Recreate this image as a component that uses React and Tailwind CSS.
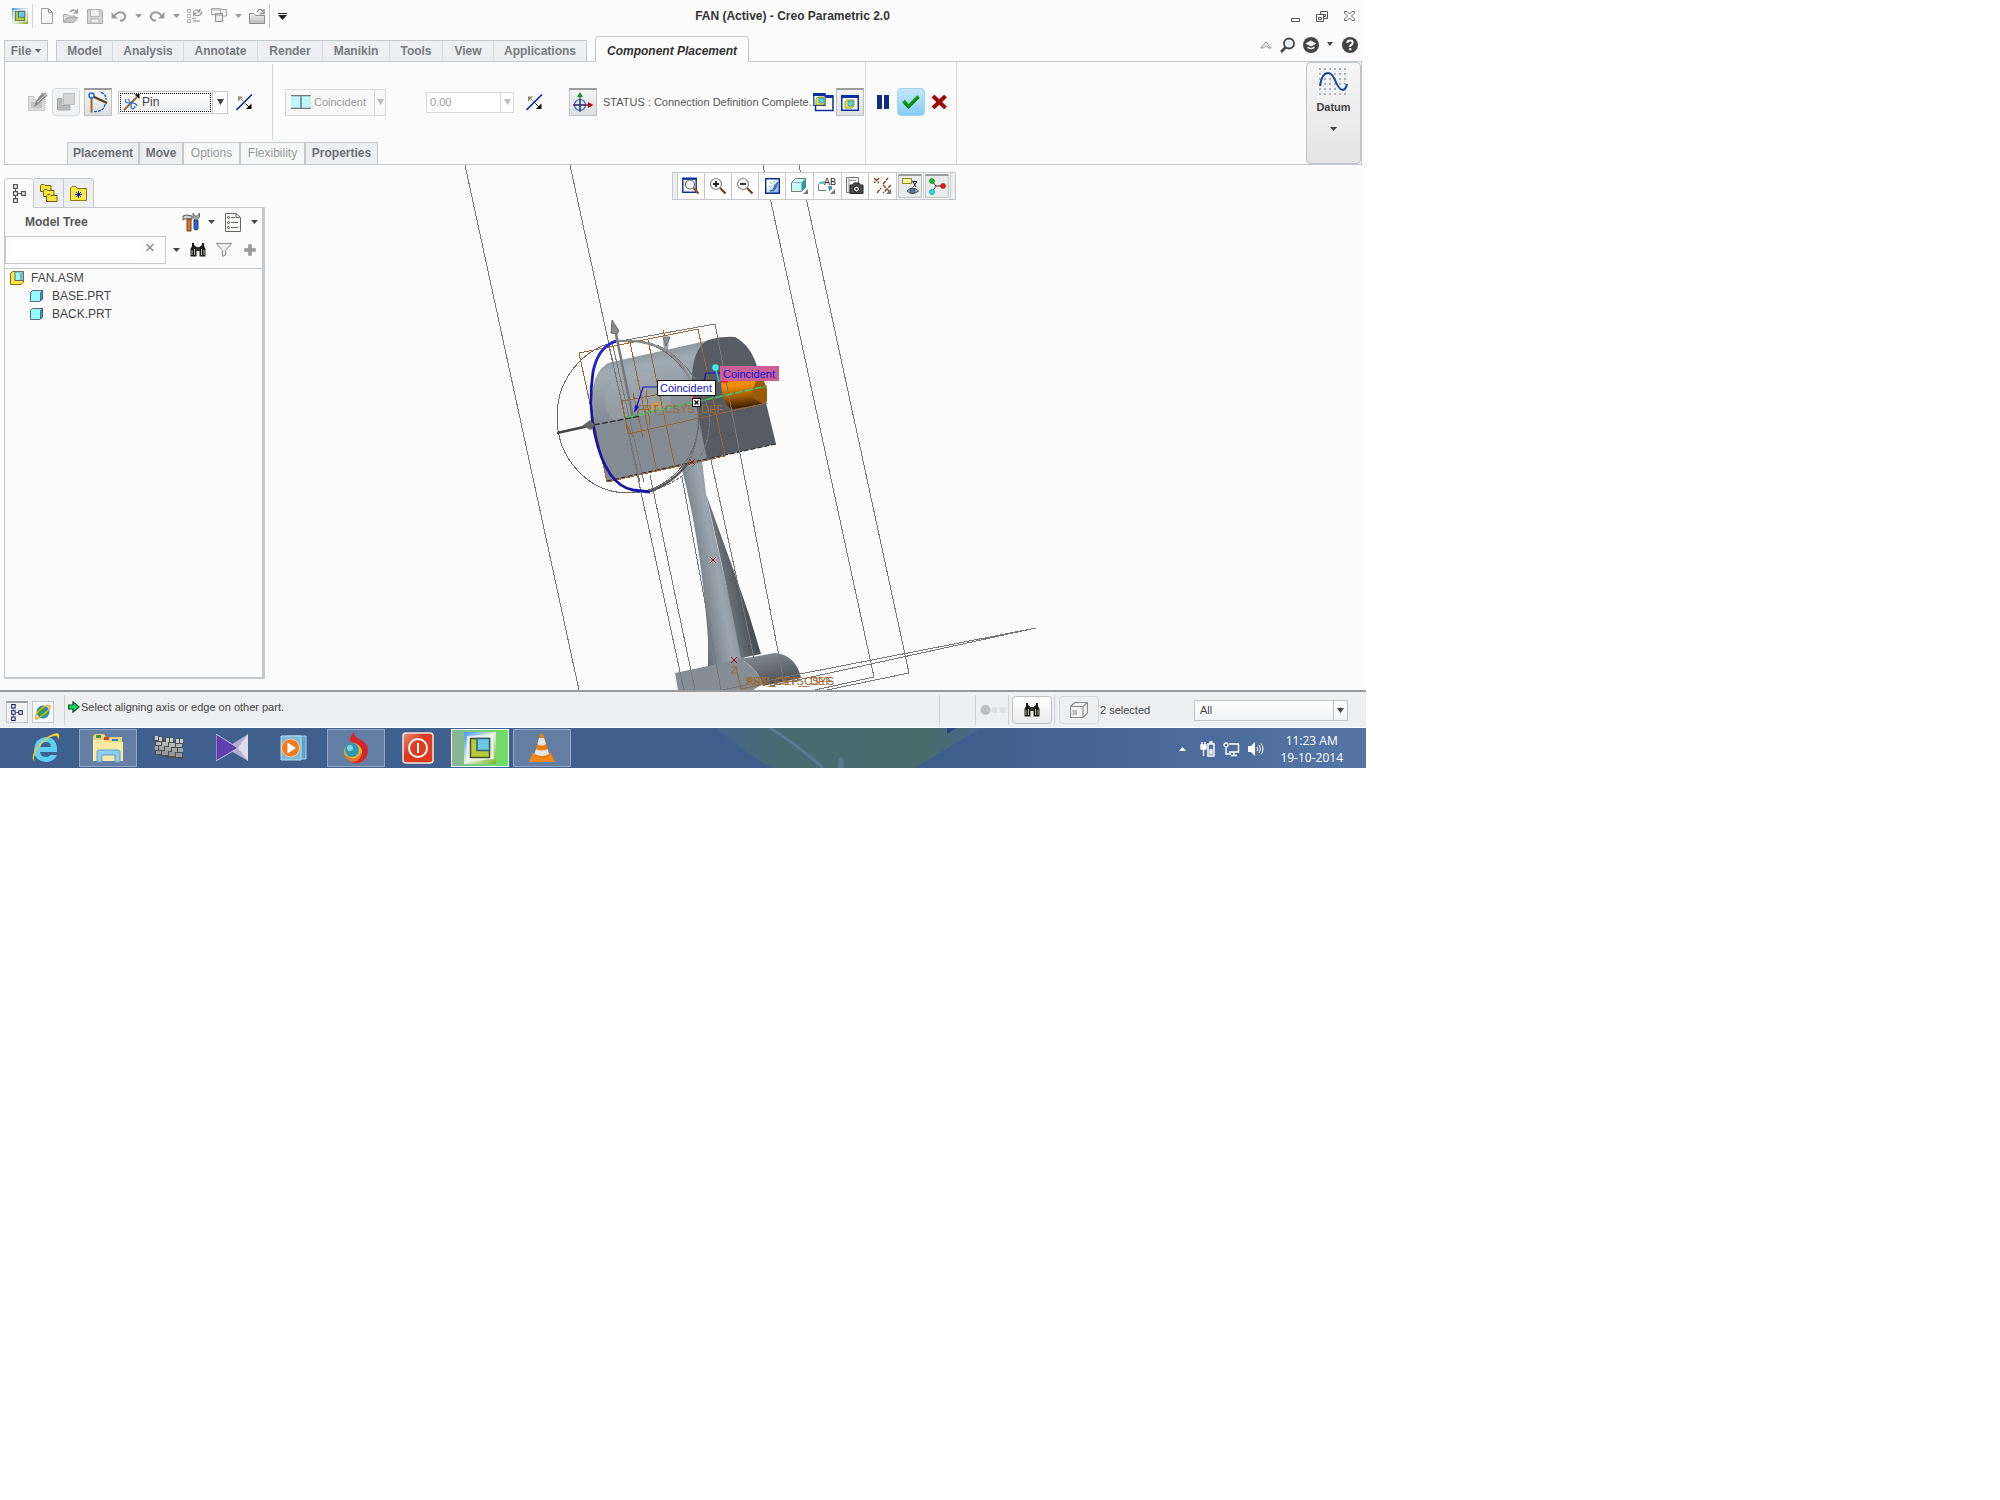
import clsx from 'clsx';

const Icon = ({ w = 16, h = 16, children, className }) => (
  <svg width={w} height={h} viewBox={`0 0 ${w} ${h}`} fill="none" className={clsx('shrink-0', className)} aria-hidden="true">
    {children}
  </svg>
);

const Caret = ({ color = '#444' }) => (
  <Icon w={7} h={4}>
    <path d="M0 0H7L3.5 4Z" fill={color} />
  </Icon>
);

const CreoIcon = ({ size = 16 }) => (
  <svg width={size} height={size} viewBox="0 0 32 32" className="shrink-0" aria-hidden="true">
    <defs>
      <linearGradient id={`creo${size}`} x1="0" y1="0" x2="1" y2="1">
        <stop offset="0" stopColor="#3d9bea" />
        <stop offset=".5" stopColor="#e4f2e8" />
        <stop offset="1" stopColor="#7ab51d" />
      </linearGradient>
    </defs>
    <rect width="32" height="32" fill={`url(#creo${size})`} />
    <path d="M3 4L29 2L30 27L2 30Z" fill="#f4f5f2" opacity=".85" />
    <rect x="6.5" y="6.5" width="19" height="19" fill="#b4cc35" stroke="#4b5030" strokeWidth="1.5" />
    <path d="M13 6.5H25.5V18.5H13Z" fill="#6cc9e6" stroke="#35617a" strokeWidth="1.5" />
  </svg>
);

const Doc = () => (
  <Icon>
    <path d="M2.5 .5H9.5L13.5 4.5V15.5H2.5Z" fill="#f7f7f7" stroke="#a0a0a0" />
    <path d="M9.5 .5V4.5H13.5" stroke="#a0a0a0" />
  </Icon>
);

const OpenFolder = () => (
  <Icon>
    <path d="M.5 14.5V6.5H5L6 8H12V10" fill="#ddd" stroke="#aaa" />
    <path d="M.5 14.5L4 9.5H15L11 14.5Z" fill="#c4c4c4" stroke="#aaa" />
    <path d="M7 4Q10 0 14 4M14.5 1V5H10.5" stroke="#999" strokeWidth="1.3" />
  </Icon>
);

const Save = () => (
  <Icon>
    <path d="M.5 1.5H14L15.5 3V15.5H.5Z" fill="#d4d4d4" stroke="#aaa" />
    <path d="M3.5 1.5H12.5V8.5H3.5Z" fill="#f0f0f0" stroke="#b4b4b4" />
    <path d="M4 11H12V15H4Z" fill="#eee" stroke="#b4b4b4" />
  </Icon>
);

const Undo = ({ flip }) => (
  <Icon className={flip ? '-scale-x-100' : undefined}>
    <path d="M3 8Q7 3 11 4.5Q15 6 14 10Q12.5 13 9 12.5" stroke="#9c9c9c" strokeWidth="2" />
    <path d="M.5 4V10.5H7Z" fill="#9c9c9c" />
  </Icon>
);

const Regenerate = () => (
  <Icon>
    <path d="M.5 1.5H3.5V4.5H.5ZM.5 6.5H3.5V9.5H.5ZM.5 11.5H3.5V14.5H.5Z" stroke="#b4b4b4" />
    <path d="M6 13H13M5 10.5H9" stroke="#aaa" strokeWidth="1.5" />
    <path d="M6 5Q8 0 12 3M15 4Q13 9 8 7" stroke="#999" strokeWidth="1.3" />
    <path d="M13.5 0V4.5H9.5ZM6 9V4.5L10 5Z" fill="#999" />
  </Icon>
);

const Windows = () => (
  <Icon>
    <path d="M.5 .5H9.5V6.5H.5ZM.5 2H9.5" stroke="#aaa" strokeWidth="1.2" />
    <path d="M9.5 1.5H15.5V8H12" stroke="#aaa" strokeWidth="1.2" />
    <path d="M4.5 5.5H11.5V13.5H4.5ZM4.5 7H11.5" fill="#eee" stroke="#999" strokeWidth="1.2" />
  </Icon>
);

const CloseFolder = () => (
  <Icon>
    <defs>
      <linearGradient id="foldgrey" x1="0" y1="0" x2="0" y2="1">
        <stop offset="0" stopColor="#f2f2f2" />
        <stop offset="1" stopColor="#b9b9b9" />
      </linearGradient>
    </defs>
    <path d="M.5 15.5V5.5H5L6.5 7.5H15.5V15.5Z" fill="url(#foldgrey)" stroke="#8c8c8c" />
    <path d="M8 4Q11 -1 14 3.5M15 1V5.5H10.5" stroke="#888" strokeWidth="1.4" />
  </Icon>
);

const Flip = () => (
  <Icon w={17} h={17}>
    <path d="M.5 16L16 .5" stroke="#0a2f9c" strokeWidth="1.6" />
    <path d="M2 2.5H7L2 7.5Z" fill="#8c8870" />
    <path d="M4 4L8 8" stroke="#8c8870" />
    <path d="M10 15H15.5V9.5Z" fill="#000" />
    <path d="M9.5 9.5L13 13" stroke="#000" />
  </Icon>
);

const EditSketch = () => (
  <Icon w={20} h={20}>
    <path d="M.5 4.5H6V8H11V4.5H17V18.5H.5Z" fill="#dcdcdc" stroke="#a9a9a9" strokeDasharray="1 1" />
    <path d="M3 10H14V16H3Z" fill="#c2c2c2" />
    <path d="M7 14L9 9L18 1M8 13L19 3M10 8L15 1" stroke="#8c8c8c" strokeWidth="1.6" />
  </Icon>
);

const Stack = () => (
  <Icon w={18} h={18}>
    <path d="M.5 5.5H5V12.5H13V17H.5Z" fill="#b9b9b9" stroke="#a6a6a6" />
    <path d="M6.5 .5H17.5V11.5H6.5Z" fill="#d6d6d6" stroke="#bbb" />
  </Icon>
);

const Mechanism = () => (
  <Icon w={22} h={22}>
    <path d="M4.5 5V20.5" stroke="#9a6a1e" strokeWidth="2" />
    <path d="M5 4L20 11" stroke="#5a3d0c" strokeWidth="2" />
    <path d="M14 .5Q19 1.5 19 8M18 12Q17 20 7 19.5" stroke="#1a5fc8" strokeWidth="1.3" strokeDasharray="3 1" />
    <circle cx="4.5" cy="3.5" r="2.5" fill="#fff" stroke="#1668e0" strokeWidth="1.5" />
  </Icon>
);

const PinIcon = () => (
  <Icon w={17} h={17}>
    <path d="M1 16L14 3" stroke="#9a6a1e" strokeWidth="2" />
    <path d="M16.5 0V5L11.5 .5Z" fill="#111" />
    <path d="M3 5Q1 9 6 9Q13 8 14 12M5 5Q9 10 8 14Q12 16 12 12" stroke="#2a6ad0" strokeWidth="1.2" />
  </Icon>
);

const CoincidentIcon = () => (
  <Icon w={20} h={14}>
    <path d="M0 1H20V13H0Z" fill="#bff6fa" />
    <path d="M0 .5H20M0 13.5H20M10 0V14" stroke="#777" strokeWidth="1.5" />
  </Icon>
);

const DragAxes = () => (
  <Icon w={22} h={22}>
    <circle cx="8" cy="13" r="5.5" stroke="#3654c8" strokeWidth="1.2" />
    <path d="M8 4V20" stroke="#187a28" strokeWidth="1.4" />
    <path d="M1 13H18" stroke="#7a2020" strokeWidth="1.4" />
    <path d="M8 7V19M2 13H14" stroke="#1c3aa8" strokeWidth="1" />
    <path d="M5 5L8 0L11 5Z" fill="#0d9a20" />
    <path d="M16 10L21.5 13L16 16Z" fill="#b80d0d" />
  </Icon>
);

const MiniPart = ({ x, y }) => (
  <g transform={`translate(${x} ${y})`}>
    <path d="M0 2L2 0H9V6L7 8H0Z" fill="#f6e94a" stroke="#8a7a10" strokeWidth=".8" />
    <path d="M3 1H8V6H3Z" fill="#4fd8e8" stroke="#2a8a98" strokeWidth=".7" />
  </g>
);

const SeparateWin = () => (
  <Icon w={21} h={19}>
    <path d="M6 3H20V17.5H2.5V13" fill="#fff" stroke="#0a2f9c" strokeWidth="1.5" />
    <path d="M13 3.5H20" stroke="#0a2f9c" strokeWidth="3" />
    <path d="M.8 .8H12V12.5H.8Z" fill="#fff" stroke="#0a2f9c" strokeWidth="1.2" />
    <path d="M0 1.5H12.5" stroke="#0a2f9c" strokeWidth="3" />
    <MiniPart x={3} y={4} />
  </Icon>
);

const AssemblyWin = () => (
  <Icon w={18} h={16}>
    <path d="M.8 .8H17.2V15.2H.8Z" fill="#fff" stroke="#0a2f9c" strokeWidth="1.5" />
    <path d="M0 1.5H18" stroke="#0a2f9c" strokeWidth="3" />
    <MiniPart x={4} y={5} />
  </Icon>
);

const Binoculars = () => (
  <Icon>
    <path d="M2 4V1H4V3L6.5 5V14.5H.5V7Z" fill="#1b1b1b" />
    <path d="M14 4V1H12V3L9.5 5V14.5H15.5V7Z" fill="#1b1b1b" />
    <path d="M6 5H10V9H6Z" fill="#333" />
    <path d="M2 8V13M4.5 7V13M11.5 7V13M14 8V13" stroke="#b6b6a0" />
  </Icon>
);

const TreeIcon = ({ dark, w = 13, h = 19 }) => (
  <svg width={w} height={h} viewBox="0 0 13 19" fill="none" aria-hidden="true">
    <path d="M2.5 5V14M5 9.5H9" stroke="#555" />
    <path
      d="M.6 .6H4.4V4.4H.6ZM.6 7.6H4.4V11.4H.6ZM.6 14.6H4.4V18.4H.6ZM8.6 7.6H12.4V11.4H8.6Z"
      fill="#fff"
      stroke={dark ? '#101a60' : '#555'}
      strokeWidth="1.2"
    />
  </svg>
);

const Folders = () => (
  <Icon w={18} h={19}>
    {[[0, 0], [3, 5], [6, 10]].map(([x, y]) => (
      <path key={x} d={`M${x + 0.5} ${y + 7.5}V${y + 1.5}L${x + 1.5} ${y + 0.5}H${x + 4}L${x + 5} ${y + 1.5}H${x + 11}V${y + 7.5}Z`} fill="#f7e43c" stroke="#6b6210" />
    ))}
  </Icon>
);

const StarFolder = () => (
  <Icon w={17} h={15}>
    <path d="M.5 14.5V2L2 .5H6L7.5 2.5H16.5V14.5Z" fill="#fbea4e" stroke="#8a7d14" />
    <path d="M8.5 5V12M5 8.5H12M6 6L11 11M11 6L6 11" stroke="#1626a0" />
  </Icon>
);

const Tools = () => (
  <Icon w={18} h={20}>
    <path d="M1 8V4Q4 2 10 4V7H6Q3 6 1 8Z" fill="#c9d3d6" stroke="#555" />
    <path d="M5 7H9V19H5Z" fill="#d8732c" stroke="#7a3a10" />
    <path d="M12 8H16V17Q14 19 12 17Z" fill="#2c66c8" stroke="#173f88" />
    <path d="M11 1V5L13 8H15L17.5 5V1L15.5 4H13Z" fill="#a3adb0" stroke="#555" strokeWidth=".8" />
  </Icon>
);

const ListPage = () => (
  <Icon w={16} h={19}>
    <path d="M.5 .5H11L15.5 4.5V18.5H.5Z" fill="#fafaf6" stroke="#666" />
    <path d="M11 .5V4.5H15.5M6 4.5H10M6 9.5H13M6 14.5H13" stroke="#666" />
    <circle cx="3.5" cy="4.5" r="1" stroke="#444" />
    <circle cx="3.5" cy="9.5" r="1" stroke="#444" />
    <circle cx="3.5" cy="14.5" r="1" stroke="#444" />
  </Icon>
);

const Funnel = () => (
  <Icon w={16} h={14}>
    <path d="M.5 .5H15.5L9.5 7.5V12L6.5 13.5V7.5Z" fill="#eee" stroke="#8c8c8c" />
  </Icon>
);

const Plus = () => (
  <Icon w={12} h={12}>
    <path d="M4.5 .5H7.5V4.5H11.5V7.5H7.5V11.5H4.5V7.5H.5V4.5H4.5Z" fill="#999" stroke="#8a8a8a" strokeWidth=".5" />
  </Icon>
);

const PartIcon = () => (
  <Icon w={13} h={12}>
    <path d="M.5 2.5L2.5 .5H12.5V9L10 11.5H.5Z" fill="#8dfbff" stroke="#667" />
    <path d="M10.5 2.5L12.5 .5V9L10.5 11Z" fill="#3aa7ae" stroke="#456" strokeWidth=".8" />
  </Icon>
);

const AsmIcon = () => (
  <Icon w={14} h={14}>
    <path d="M.5 2.5L2.5 .5H13.5V11L11 13.5H.5Z" fill="#fbe33a" stroke="#7a6a10" />
    <path d="M5 .8H13.2V9.5H5Z" fill="#8dfbff" stroke="#667" />
    <path d="M11 2V9.5" stroke="#667" />
  </Icon>
);

const Magnifier = ({ sign }) => (
  <Icon w={18} h={18}>
    <path d="M11 11L16.5 16.5" stroke="#7a4420" strokeWidth="2.4" />
    <circle cx="7" cy="7" r="5.5" fill="#f4f4f4" stroke="#888" strokeWidth="1.2" />
    <path d={sign === '+' ? 'M4 7H10M7 4V10' : 'M4 7H10'} stroke="#222" strokeWidth="1.8" />
  </Icon>
);

const Refit = () => (
  <Icon w={18} h={18}>
    <path d="M.8 2H14.2V15.2H.8Z" fill="#fff" stroke="#0a2f9c" strokeWidth="1.4" />
    <path d="M0 1.5H15" stroke="#0a2f9c" strokeWidth="2" />
    <circle cx="8" cy="7.5" r="4.5" fill="#f2f2f2" stroke="#666" strokeWidth="1.2" />
    <path d="M11.5 11L16.5 16.5" stroke="#8a5020" strokeWidth="2.2" />
  </Icon>
);

const Repaint = () => (
  <Icon w={15} h={16}>
    <defs>
      <linearGradient id="repaint" x1="0" y1="0" x2="1" y2="1">
        <stop offset=".3" stopColor="#fff" />
        <stop offset="1" stopColor="#6aa4e8" />
      </linearGradient>
    </defs>
    <path d="M.7 .7H14.3V15.3H.7Z" fill="url(#repaint)" stroke="#0a2f8c" strokeWidth="1.4" />
    <path d="M13 4Q8 8 9 10Q8 13 5 13Q9 14 11 10Z" fill="#4a78c0" stroke="#24509c" strokeWidth=".7" />
    <path d="M5 4L7 6M9 3V5M4 8L6 9" stroke="#789" strokeDasharray="1 1" />
  </Icon>
);

const Corner = () => <path d="M17 12V17H12Z" fill="#777" />;

const Display = () => (
  <Icon w={18} h={18}>
    <path d="M.5 5.5L4.5 1.5H14.5V10.5L10.5 14.5H.5Z" fill="#c9fbfb" stroke="#777" />
    <path d="M10.5 5.5L14.5 1.5V10.5L10.5 14.5Z" fill="#2f9c9c" />
    <path d="M.5 5.5H10.5" stroke="#aaa" />
    <Corner />
  </Icon>
);

const Views = () => (
  <Icon w={19} h={18}>
    <path d="M.5 13.5V7.5L3 5H7M.5 13.5H8" stroke="#777" />
    <path d="M1 6H6" stroke="#4fd0d0" strokeWidth="2" />
    <path d="M10 9H14V12L11 14.5Z" fill="#3a9c9c" />
    <text x="6" y="8" className="fill-[#222] font-['Liberation_Mono',monospace] text-[10px]">AB</text>
    <Corner />
  </Icon>
);

const Camera = () => (
  <Icon w={18} h={18}>
    <path d="M.5 .5H12.5V15.5H.5Z" fill="#f4f4f4" stroke="#777" />
    <path d="M3 3.5H10M3 .5V15" stroke="#999" />
    <path d="M4 8H7L8 6H13L14 8H17V16.5H4Z" fill="#4b4b4b" stroke="#222" />
    <circle cx="10.5" cy="12" r="3" fill="#eee" stroke="#111" />
    <circle cx="10.5" cy="12" r="1" fill="#111" />
  </Icon>
);

const DatumDisplay = () => (
  <Icon w={18} h={18}>
    <path d="M0 1L5 6M5 1L0 6M9 8L17 16M17 8L9 16M3 16L7 11M9 7L14 1" stroke="#8a4a24" strokeWidth="1.5" strokeDasharray="4 1" />
    <Corner />
  </Icon>
);

const Annotations = () => (
  <Icon w={17} h={17}>
    <path d="M.5 .5H9.500V5.500H.5Z" fill="#fbfba0" stroke="#8a8a20" />
    <path d="M10 3.500H15M14.500 4L11.500 9M11 4L14 9" stroke="#333" />
    <path d="M5 13Q10.500 7 16.500 13Q10.500 18 5 13Z" fill="#b4b4ac" stroke="#444" />
    <circle cx="10.5" cy="13" r="2.500" fill="#5078a8" stroke="#333" strokeWidth=".6" />
  </Icon>
);

const SpinCenter = () => (
  <Icon w={17} h={17}>
    <path d="M3 3L7 8L3 14M7 8H14" stroke="#333" />
    <circle cx="3" cy="3" r="2.5" fill="#12c41c" stroke="#0a7010" strokeWidth=".6" />
    <circle cx="14" cy="8" r="2.5" fill="#ee1717" stroke="#901010" strokeWidth=".6" />
    <circle cx="3" cy="14" r="2.5" fill="#25e4ee" stroke="#0c8088" strokeWidth=".6" />
  </Icon>
);

const quickButtons = [
  { label: 'New', icon: <Doc /> },
  { label: 'Open', icon: <OpenFolder /> },
  { label: 'Save', icon: <Save /> },
  { label: 'Undo', icon: <Undo />, menu: true },
  { label: 'Redo', icon: <Undo flip />, menu: true },
  { label: 'Regenerate', icon: <Regenerate /> },
  { label: 'Windows', icon: <Windows />, menu: true },
  { label: 'Close', icon: <CloseFolder /> },
];

const TitleBar = () => (
  <header className="flex h-9 items-start pl-2 pr-[11px]">
    <div className="flex h-8 items-center">
      <span className="flex w-6 justify-center"><CreoIcon /></span>
      <span className="mr-0.5 h-6 w-px bg-[#cfcfcf]" />
      {quickButtons.map(b => (
        <span key={b.label} className="flex items-center">
          <button aria-label={b.label} className="flex w-6 justify-center">{b.icon}</button>
          {b.menu && (
            <button aria-label={`${b.label} menu`} className="flex w-3.5 justify-center"><Caret color="#999" /></button>
          )}
        </span>
      ))}
      <span className="h-6 w-px bg-[#cfcfcf]" />
      <button aria-label="Customize" className="flex w-6 justify-center">
        <Icon w={9} h={7}>
          <path d="M0 .5H9" stroke="#222" />
          <path d="M0 2H9L4.5 7Z" fill="#222" />
        </Icon>
      </button>
    </div>
    <h1 className="flex h-8 flex-1 items-center justify-center text-xs font-bold text-[#333]">FAN (Active) - Creo Parametric 2.0</h1>
    <div className="flex h-8 items-center gap-4">
      <button aria-label="Minimize"><Icon w={9} h={12}><path d="M.5 8.5H8.5V11.5H.5Z" fill="#fff" stroke="#555" /></Icon></button>
      <button aria-label="Restore">
        <Icon w={12} h={11}>
          <path d="M4.5 .5H11.5V7.5H7.5V3.5H4.5ZM7.5 3.5H9.5V5.5H7.5M.5 3.5H7.5V10.5H.5ZM2.5 6.5H5.5V8.5H2.5Z" fill="#fff" stroke="#555" />
        </Icon>
      </button>
      <button aria-label="Close window">
        <Icon w={11} h={10}>
          <path d="M.5 .5H3L5.5 3L8 .5H10.5V2L7.5 5L10.5 8V9.5H8L5.5 7L3 9.5H.5V8L3.5 5L.5 2Z" fill="#fff" stroke="#555" strokeWidth=".9" />
        </Icon>
      </button>
    </div>
  </header>
);

const ribbonTabs = [
  { label: 'Model', cls: 'w-14' },
  { label: 'Analysis', cls: 'w-[71px]' },
  { label: 'Annotate', cls: 'w-[74px]' },
  { label: 'Render', cls: 'w-[65px]' },
  { label: 'Manikin', cls: 'w-[67px]' },
  { label: 'Tools', cls: 'w-[53px]' },
  { label: 'View', cls: 'w-[51px]' },
  { label: 'Applications', cls: 'w-[92px]' },
];

const RibbonTabs = () => (
  <nav className="flex h-[25px] items-end px-1 text-xs font-bold text-[#777b80]">
    <button className="flex h-[21px] w-11 items-center justify-center gap-1 border border-b-0 border-[#c5c9ce] bg-[#edeff1]">
      File <Icon w={6} h={4}><path d="M0 0H6L3 4Z" fill="#666" /></Icon>
    </button>
    <div className="ml-2 flex h-[21px] border border-b-0 border-[#c5c9ce] bg-[#edeff1]">
      {ribbonTabs.map(t => (
        <button key={t.label} className={clsx('border-r border-[#d9dcdf] last:border-r-0', t.cls)}>{t.label}</button>
      ))}
    </div>
    <button className="relative -mb-px ml-2 h-[26px] rounded-t-sm border border-b-0 border-[#c5c9ce] bg-[#fcfcfc] px-[11px] pt-0.5 italic text-[#333]">
      Component Placement
    </button>
    <div className="mb-2 ml-auto mr-1 flex items-center">
      <button aria-label="Minimize ribbon">
        <Icon w={12} h={8}><path d="M.8 7L6 1L11.2 7H8.5L6 4.5L3.5 7Z" stroke="#888" /></Icon>
      </button>
      <button aria-label="Search" className="ml-2">
        <Icon w={15} h={16}>
          <circle cx="9" cy="6.5" r="5" fill="#eef4f8" stroke="#444" strokeWidth="1.8" />
          <path d="M5.5 10.5L1 15" stroke="#444" strokeWidth="2.6" />
        </Icon>
      </button>
      <button aria-label="Learning" className="ml-2">
        <Icon>
          <circle cx="8" cy="8" r="8" fill="#444" />
          <path d="M2.5 6.5L8 3.5L13.5 6.5L8 9.5Z" fill="#fff" />
          <path d="M4.5 9.5V11Q8 13.5 11.5 11V9.5L8 11Z" fill="#fff" />
        </Icon>
      </button>
      <button aria-label="Learning menu" className="ml-2"><Icon w={6} h={6}><path d="M0 0H6L3 4Z" fill="#444" /></Icon></button>
      <button aria-label="Help" className="ml-2">
        <Icon w={17}>
          <circle cx="9" cy="8" r="8" fill="#444" />
          <path d="M6.3 6Q6.5 3.5 9 3.5Q11.7 3.5 11.7 5.8Q11.7 7.2 9.2 8.6V10" stroke="#fff" strokeWidth="1.9" />
          <circle cx="9.2" cy="12.2" r="1.2" fill="#fff" />
        </Icon>
      </button>
    </div>
  </nav>
);

const pressed = 'flex size-7 shrink-0 items-center justify-center border border-t-2 border-[#bfc1c4] border-t-[#9a9c9f] bg-linear-to-b from-[#f5f5f6] to-[#dcdee2]';

const dashTabs = [
  { label: 'Placement', cls: 'w-[72px]' },
  { label: 'Move', cls: 'w-11' },
  { label: 'Options', cls: 'w-[57px]', off: true },
  { label: 'Flexibility', cls: 'w-[65px]', off: true },
  { label: 'Properties', cls: 'w-[73px]' },
];

const Ribbon = () => (
  <section className="mx-1 flex h-[104px] border border-[#c5c9ce]">
    <div className="flex flex-col">
      <div className="flex h-20 items-center pl-[23px] text-[11px] text-[#555]">
        <button aria-label="Edit sketch"><EditSketch /></button>
        <button aria-label="Offset" className="ml-1 flex size-7 items-center justify-center rounded-sm border border-[#d6d8da] bg-[#f2f3f4]"><Stack /></button>
        <button aria-label="Mechanism" className={clsx(pressed, 'ml-1')}><Mechanism /></button>
        <label className="ml-1.5 flex h-[23px] w-[110px] border border-[#c5c9ce] bg-white">
          <span className="m-px flex w-[91px] items-center border border-dotted border-black bg-linear-to-b from-white to-[#eff0f1] pl-0.5">
            <PinIcon />
            <select aria-label="Connection type" className="ml-0.5 w-full appearance-none bg-transparent text-xs text-[#444] outline-none">
              <option>Pin</option>
            </select>
          </span>
          <span className="flex flex-1 items-center justify-center border-l border-[#c5c9ce]"><Icon w={7} h={6}><path d="M0 0H7L3.5 6Z" fill="#444" /></Icon></span>
        </label>
        <button aria-label="Flip connection" className="ml-2"><Flip /></button>
        <span className="ml-[19px] h-[76px] w-px bg-[#d3d6d9]" />
        <label className="ml-3 flex h-[27px] w-[101px] border border-[#d6d8da] bg-[#f8f8f8]">
          <span className="flex flex-1 items-center pl-[5px]">
            <CoincidentIcon />
            <select aria-label="Constraint" disabled className="ml-[3px] w-[60px] appearance-none bg-transparent text-[#999] opacity-100">
              <option>Coincident</option>
            </select>
          </span>
          <span className="flex w-3.5 items-center justify-center border-l border-[#d6d8da]"><Icon w={7} h={6}><path d="M0 0H7L3.5 6Z" fill="#bbb" /></Icon></span>
        </label>
        <span className="ml-10 flex h-[21px] w-[88px] border border-[#d6d8da] bg-white">
          <input aria-label="Offset value" disabled defaultValue="0.00" className="w-[73px] pl-[3px] text-[#999]" />
          <span className="flex flex-1 items-center justify-center border-l border-[#d6d8da]"><Icon w={7} h={6}><path d="M0 0H7L3.5 6Z" fill="#bbb" /></Icon></span>
        </span>
        <button aria-label="Flip constraint" className="ml-3"><Flip /></button>
        <button aria-label="3D dragger" className={clsx(pressed, 'ml-[26px]')}><DragAxes /></button>
        <span className="ml-1.5 whitespace-nowrap">STATUS : Connection Definition Complete.</span>
        <button aria-label="Separate window" className="ml-px"><SeparateWin /></button>
        <button aria-label="Assembly window" className={clsx(pressed, 'ml-0.5 mr-px')}><AssemblyWin /></button>
      </div>
      <div className="flex h-[22px] pl-[62px] text-xs font-bold text-[#6d7175]">
        {dashTabs.map(t => (
          <button
            key={t.label}
            disabled={t.off}
            className={clsx('border border-b-0 border-[#c5c9ce] pb-px', t.cls, t.off ? 'bg-[#f7f8f8] font-normal text-[#999]' : 'bg-[#edeff1]')}
          >
            {t.label}
          </button>
        ))}
      </div>
    </div>
    <div className="flex h-full items-start border-x border-[#dadcdf] px-2.5">
      <div className="flex h-20 items-center">
        <button aria-label="Pause" className="flex w-3.5 justify-center">
          <Icon w={12} h={14}><path d="M0 0H5V14H0ZM7 0H12V14H7Z" fill="#0b2f85" /></Icon>
        </button>
        <button aria-label="Accept" className="ml-[7px] flex size-7 items-center justify-center rounded-sm border border-[#9fd3f2] bg-linear-to-b from-[#c4e6fa] to-[#86cdf8]">
          <Icon w={18} h={14}><path d="M1.5 6L6.5 11.5L16.5 1.5" stroke="#0a9a10" strokeWidth="3.5" /><path d="M2 8.5L6.5 13L17 3" stroke="#0a6a10" /></Icon>
        </button>
        <button aria-label="Cancel" className="-mr-0.5 ml-1.5">
          <Icon w={17} h={14}><path d="M2 1L14.5 13M14.5 1L2 13" stroke="#a00606" strokeWidth="4" /></Icon>
        </button>
      </div>
    </div>
    <div className="flex-1" />
    <button className="flex w-[55px] flex-col items-center rounded-sm border border-[#c0c3c6] bg-linear-to-b from-[#f6f6f6] to-[#e4e4e5] pt-[5px] text-[11px] font-bold text-[#444]">
      <Icon w={29} h={28}>
        {[0, 5, 10, 15, 20, 25].map(y => (
          <path key={y} d={`M0 ${y + 1}H28`} stroke="#a9b4bd" strokeWidth="2" strokeDasharray="2 3" />
        ))}
        <path d="M1 18Q3 5 9 5Q13 5 16 12Q20 22 24 22Q27 21 28 16" stroke="#1748a0" strokeWidth="2" />
      </Icon>
      <span className="mt-[3px] leading-4">Datum</span>
      <span className="mt-3"><Caret /></span>
    </button>
  </section>
);

const tree = [
  { name: 'FAN.ASM', icon: <AsmIcon />, cls: 'pl-[5px] gap-[7px]' },
  { name: 'BASE.PRT', icon: <PartIcon />, cls: 'pl-[25px] gap-[9px]' },
  { name: 'BACK.PRT', icon: <PartIcon />, cls: 'pl-[25px] gap-[9px]' },
];

const ModelTree = () => (
  <aside className="flex w-[265px] shrink-0 flex-col pb-[11px] pl-1 pt-[13px] text-[#444]">
    <div className="flex h-[29px]">
      <button aria-label="Model tree" className="relative -mb-px flex w-[30px] items-center justify-center rounded-t-sm border border-b-0 border-[#c5c9ce] bg-[#fcfcfc]"><TreeIcon /></button>
      <button aria-label="Folder browser" className="flex w-[30px] items-center justify-center border-r border-t border-[#c5c9ce] bg-[#edeff1]"><Folders /></button>
      <button aria-label="Favorites" className="flex w-[30px] items-center justify-center rounded-tr-sm border-r border-t border-[#c5c9ce] bg-[#edeff1]"><StarFolder /></button>
    </div>
    <div className="flex-1 border-2 border-l border-r-[3px] border-t border-[#c5c9ce]">
      <div className="flex h-7 items-center pr-1">
        <h2 className="flex-1 pl-5 text-xs font-bold text-[#555]">Model Tree</h2>
        <button aria-label="Settings" className="mr-2"><Tools /></button>
        <Caret />
        <button aria-label="Show" className="ml-2.5 mr-2.5"><ListPage /></button>
        <Caret />
      </div>
      <div className="flex h-8 items-start">
        <label className="flex h-7 w-[161px] items-center border border-[#c5c9ce] bg-[#fcfcfc] pl-1.5">
          <input aria-label="Search tree" className="h-5 w-[126px] bg-white" />
          <button aria-label="Clear" className="ml-2">
            <Icon w={8} h={14}><path d="M.5 1L7.5 8M7.5 1L.5 8" stroke="#888" strokeWidth="1.4" /></Icon>
          </button>
        </label>
        <div className="flex h-7 items-center pl-[7px]">
          <Caret />
          <button aria-label="Find" className="ml-2.5"><Binoculars /></button>
          <button aria-label="Filter" className="ml-2.5"><Funnel /></button>
          <button aria-label="Add" className="ml-3"><Plus /></button>
        </div>
      </div>
      <ul className="border-t border-[#c5c9ce] text-xs">
        {tree.map(n => (
          <li key={n.name} className={clsx('flex h-[18px] items-center', n.cls)}>{n.icon}{n.name}</li>
        ))}
      </ul>
    </div>
  </aside>
);

const viewButtons = [
  { label: 'Refit', icon: <Refit /> },
  { label: 'Zoom in', icon: <Magnifier sign="+" /> },
  { label: 'Zoom out', icon: <Magnifier sign="-" /> },
  { label: 'Repaint', icon: <Repaint /> },
  { label: 'Display style', icon: <Display />, menu: true },
  { label: 'Saved orientations', icon: <Views />, menu: true },
  { label: 'View manager', icon: <Camera /> },
  { label: 'Datum display', icon: <DatumDisplay />, menu: true },
  { label: 'Annotation display', icon: <Annotations />, on: true },
  { label: 'Spin center', icon: <SpinCenter />, on: true },
];

const ViewToolbar = () => (
  <div className="absolute left-[407px] top-[7px] flex h-7 border border-[#c5c9ce] bg-[#edeff1] px-1">
    {viewButtons.map(b => (
      <button
        key={b.label}
        aria-label={b.label}
        className={clsx('flex border-l border-[#c5c9ce] bg-white p-px last:w-7 last:border-r', b.menu ? 'w-7' : 'w-[27px]')}
      >
        <span className={clsx('flex size-full items-center justify-center', b.on && 'border border-t-2 border-[#bfc1c4] border-t-[#9a9c9f] bg-[#e9eaec]')}>{b.icon}</span>
      </button>
    ))}
  </div>
);

// Datum planes that frame the assembly
const planes = [
  'M465 165L579 690', 'M570 165L684 690', 'M650 475L695 690', 'M682 477L721 690', 'M711 460L757 672',
  'M615 342L715 324L783 677', 'M763 165L874 677L815 690', 'M799 165L909 673L827 690',
  'M800 674L1036 628L770 686', 'M722 690L800 674', 'M608 342L640 482', 'M612 342L644 482',
];

const Cross = ({ x, y }) => <path d={`M${x - 3} ${y - 3}l6 6m0 -6l-6 6`} stroke="#a01010" />;

const ModelView = () => (
  <svg viewBox="265 165 1101 525" preserveAspectRatio="xMinYMin slice" className="block h-[525px] w-full" fill="none" role="img" aria-label="Fan assembly">
    <defs>
      <linearGradient id="body" gradientUnits="userSpaceOnUse" x1="640" y1="345" x2="655" y2="425">
        <stop offset="0" stopColor="#7c858d" />
        <stop offset=".25" stopColor="#a0acb5" />
        <stop offset=".8" stopColor="#868f96" />
        <stop offset="1" stopColor="#838b92" />
      </linearGradient>
      <linearGradient id="stem" gradientUnits="userSpaceOnUse" x1="688" y1="572" x2="726" y2="565">
        <stop offset="0" stopColor="#5f676e" />
        <stop offset=".45" stopColor="#87919a" />
        <stop offset=".75" stopColor="#9ba7b1" />
        <stop offset="1" stopColor="#8a949c" />
      </linearGradient>
      <linearGradient id="stemDark" gradientUnits="userSpaceOnUse" x1="716" y1="585" x2="742" y2="580">
        <stop offset="0" stopColor="#7b848b" />
        <stop offset="1" stopColor="#4b5157" />
      </linearGradient>
      <linearGradient id="foot" x1="0" y1="0" x2=".4" y2="1">
        <stop offset="0" stopColor="#89939b" />
        <stop offset="1" stopColor="#4c5258" />
      </linearGradient>
      <linearGradient id="shaft" x1="0" y1="0" x2=".15" y2="1">
        <stop offset="0" stopColor="#d57a05" />
        <stop offset=".3" stopColor="#f58f0c" />
        <stop offset=".65" stopColor="#a55c02" />
        <stop offset="1" stopColor="#3b1f02" />
      </linearGradient>
    </defs>
    <path d="M681 466L702 460L706 494Q724 580 745 660L735 668L708 668V640Q701 540 681 466Z" fill="url(#stem)" />
    <path d="M706 494L736 577Q750 615 761 654L741 658Q726 580 706 494Z" fill="url(#stemDark)" />
    <path d="M740 659L775 653Q796 655 801 678L763 686Q758 668 740 659Z" fill="url(#foot)" />
    <path d="M675 673L708 666L740 659Q757 668 763 684L753 690H678Z" fill="#858e95" />
    <path d="M663 339H669L668 352H664Z" fill="#9aa3aa" />
    <path d="M607 481L594 425L592 392Q596 366 612 362L715 339V459Z" fill="url(#body)" />
    <ellipse cx="638" cy="401" rx="33" ry="30" fill="#a7adb2" opacity=".4" />
    <path d="M593 426L715 400V459L607 481Z" fill="#838c92" />
    <path d="M707 459L699 420L692 380Q692 349 708 340Q722 336 735 337Q752 346 758 370L776 444Z" fill="#575c62" />
    <path d="M721 383L724 380L754 377L764 382L767 389V401L763 404L733 409Q723 408 721 383Z" fill="url(#shaft)" />
    <path d="M757 378L764 381L767 389V401L763 404L751 396Z" fill="#9a5b06" />
    <path d="M607 481L707 459L776 444" stroke="#222" strokeDasharray="5 2" />
    <g stroke="#777" shapeRendering="crispEdges">
      {planes.map(d => <path key={d} d={d} />)}
    </g>
    <g stroke="#9a6530" shapeRendering="crispEdges">
      <path d="M579 353L698 329L725 456L607 482ZM630 342L657 472M648 340L675 467" />
      <path d="M622 401L672 392M622 401L628 434L767 403M633 393L643 437M646 390L650 425M627 425L633 437M663 330L665 336" />
    </g>
    <g shapeRendering="crispEdges">
      <ellipse cx="628" cy="417" rx="71" ry="76" stroke="#6b6b6b" />
      <path d="M616 341Q650 337 672 354Q702 378 709 414Q714 470 650 492" stroke="#777" strokeDasharray="4 1" />
    </g>
    <path d="M616 341Q648 339 670 353Q684 364 692 384" stroke="#8b8b8b" strokeWidth="2" />
    <path d="M698 400Q701 435 689 462" stroke="#666" strokeWidth="1.3" strokeDasharray="2 1" />
    <path d="M650 491Q672 484 689 462" stroke="#555" strokeWidth="2.2" />
    <path d="M616 341Q598 347 593 372Q588 405 595 435Q606 485 633 490L650 492" stroke="#1717a2" strokeWidth="2.8" />
    <path d="M616 341Q598 347 593 372" stroke="#2929e4" strokeWidth="2" />
    <path d="M616 334L633 418" stroke="#777" strokeWidth="2.5" />
    <path d="M612 320L619 331L617 334L611 333Z" fill="#8b8b8b" stroke="#555" strokeWidth=".8" />
    <path d="M663 337H670L666 346Z" fill="#8b949b" stroke="#666" strokeWidth=".8" />
    <path d="M557 433L593 425" stroke="#444" strokeWidth="2.5" />
    <path d="M582 426L590 420L595 425L591 430Z" fill="#666" />
    <path d="M594 425L640 416" stroke="#333" strokeWidth="1.5" strokeDasharray="6 2" />
    <path d="M628 417L767 386" stroke="#777" strokeWidth="1.5" />
    <path d="M628 417L767 386" stroke="#2fe04c" strokeWidth="1.2" strokeDasharray="7 3" />
    <g className="fill-[#a06a34] font-['Liberation_Sans',sans-serif] text-[11px]">
      <text x="637" y="413">PRT_CSYS_DEF</text>
      <text x="746" y="685">ASM_DEF_CSYS</text>
      <text x="746" y="685">PRT_CSYS_DEF</text>
    </g>
    <path d="M652 410Q652 403 656 403Q660 403 660 410" stroke="#f39a1a" strokeWidth="1.5" />
    <path d="M736 667L741 689L770 683M731 667H737L731 673H737" stroke="#9a6530" />
    <Cross x={692} y={462} />
    <Cross x={713} y={560} />
    <Cross x={734} y={660} />
    <path d="M657 387H643L636 409M720 373H706L700 396" stroke="#1212c8" strokeWidth="1.2" />
    <path d="M634 413L635 405L639 407Z" fill="#1212f0" />
    <path d="M716 370L719 382" stroke="#35d8c8" strokeWidth="1.3" />
    <circle cx="715.5" cy="367.5" r="3.2" fill="#35f0f4" />
    <path d="M722 381.5H728M694 394V398" stroke="#f02020" strokeWidth="2" />
    <path d="M692.5 398.5H700.5V406.5H692.5Z" fill="#fff" stroke="#000" />
    <path d="M694.5 400.5L698.5 404.5M698.5 400.5L694.5 404.5" stroke="#000" strokeWidth="1.4" />
    <path d="M657.5 380.5H715.5V395.5H657.5Z" fill="#fff" stroke="#111" />
    <path d="M720 366H779V381H720Z" fill="#ca6096" />
    <g className="fill-[#1010d4] font-['Liberation_Sans',sans-serif] text-[11px]">
      <text x="660" y="392">Coincident</text>
      <text x="723" y="378">Coincident</text>
    </g>
  </svg>
);

const Divider = () => <span className="h-[30px] w-px bg-[#cfd1d4]" />;

const StatusBar = () => (
  <footer className="flex h-[38px] items-center border-b border-t-2 border-b-white border-t-[#999] bg-[#edeff1] pt-px text-[11px] text-[#444]">
    <button aria-label="Toggle tree" className="ml-1.5 mt-1 flex size-[22px] items-center justify-center border border-t-2 border-[#c5c7ca] border-t-[#9a9c9f] bg-[#f2f2f4]">
      <TreeIcon dark w={12} h={17} />
    </button>
    <button aria-label="Toggle browser" className="ml-1 mr-2.5 mt-1 flex size-[22px] items-center justify-center border border-[#c5c7ca] bg-[#f8f8f8]">
      <Icon>
        <circle cx="8" cy="8" r="6.5" fill="#1f8ad0" />
        <path d="M4 4Q9 2 10 6Q6 9 9 13Q4 13 3 9ZM11 7L14 9L11 13Z" fill="#2aa53c" />
        <path d="M1 15Q-1 11 6 5Q13 0 15 2Q15 6 9 10Q3 15 1 15Z" stroke="#e2b416" strokeWidth="1.6" />
      </Icon>
    </button>
    <Divider />
    <p className="ml-[3px] flex flex-1 items-center gap-px pb-1.5">
      <Icon w={12} h={12}><path d="M.7 4H5V.8L11.2 6L5 11.2V8H.7Z" fill="#12e060" stroke="#0a4a20" strokeWidth="1.2" /></Icon>
      Select aligning axis or edge on other part.
    </p>
    <Divider />
    <span className="w-[35px]" />
    <Divider />
    <span className="ml-1 mr-0.5">
      <Icon w={26} h={12}>
        <circle cx="5.5" cy="6" r="5" fill="#bdbfc1" />
        <circle cx="14.5" cy="6" r="3" fill="#dcdee0" />
        <circle cx="22.5" cy="6" r="3" fill="#dcdee0" />
      </Icon>
    </span>
    <Divider />
    <button aria-label="Find" className="ml-[3px] mr-0.5 flex h-7 w-10 items-center justify-center rounded-sm border border-[#bfc1c3] bg-linear-to-b from-white to-[#ececed]"><Binoculars /></button>
    <Divider />
    <button aria-label="Selection" className="ml-1 flex h-7 w-10 items-center justify-center rounded-sm border border-[#d4d6d8]">
      <Icon w={18} h={16}>
        <path d="M.5 4.5L5 .5H17.5V11L13 15.5H.5ZM.5 4.5H13V15.5M13 4.5L17.5 .5" fill="#f2f2f2" stroke="#8c8c8c" strokeWidth="1.2" />
        <path d="M2.5 8H7V13H2.5Z" fill="#bbb" />
      </Icon>
    </button>
    <span className="ml-px w-[94px]">2 selected</span>
    <label className="mr-[18px] flex h-[21px] w-[154px] items-center border border-[#c0c3c6] bg-linear-to-b from-white to-[#f2f3f4]">
      <select aria-label="Selection filter" className="h-full flex-1 appearance-none bg-transparent pl-[5px]">
        <option>All</option>
      </select>
      <span className="flex h-full w-3.5 items-center justify-center border-l border-[#c0c3c6]"><Icon w={7} h={5}><path d="M0 0H7L3.5 5Z" fill="#444" /></Icon></span>
    </label>
  </footer>
);

const apps = [
  {
    label: 'Internet Explorer',
    icon: (
      <Icon w={32} h={32}>
        <path d="M27 20H10Q10.5 25 16 25Q19 25 20.5 23H27Q24 30 16 30Q4 29 4 17.5Q5 6 16 5Q28 6 27 20ZM10.5 15H21Q20.5 10 16 10Q11.5 10 10.5 15Z" fill="#5ed0f8" />
        <path d="M5 30Q-1 26 8 14Q18 2 27 1Q31 2 28 8Q28 3 24 4Q16 5 8 17Q2 26 5 30Z" fill="#f5c928" />
      </Icon>
    ),
  },
  {
    label: 'Explorer',
    open: true,
    icon: (
      <Icon w={32} h={30}>
        <path d="M1 27V3L3 1H12L14 4H30V27Z" fill="#efd27c" />
        <path d="M4 2H9V5H4Z" fill="#2c9a42" /><path d="M12 4H17V7H12Z" fill="#cf4030" /><path d="M20 6H26V8H20Z" fill="#3582cc" />
        <path d="M1 7H11L13 9H31V28H1Z" fill="#fbe9a4" />
        <path d="M5 29V19Q5 17 7 17H26Q28 17 28 19V29H23V22H10V29Z" fill="#8fcdf0" stroke="#5d9fcc" />
      </Icon>
    ),
  },
  {
    label: 'Firewall',
    icon: (
      <Icon w={32} h={27}>
        <path d="M1 1H8V4H12V2H19V6H22V3H29V25L22 23H15L8 21L1 19Z" fill="#4c4f50" />
        <g fill="#c6cac8">
          <path d="M1 1H4V5H1ZM5 2H8V6H5ZM12 3H15V7H12ZM16 3H19V7H16ZM22 4H25V8H22ZM26 4H29V8H26Z" />
          <path d="M2 7H7V10H2ZM8 7H14V11H8ZM15 8H21V12H15ZM22 9H28V12H22Z" opacity=".85" />
          <path d="M1 11H4V15H1ZM5 11H10V15H5ZM11 12H17V16H11ZM18 13H23V17H18ZM24 13H29V17H24Z" opacity=".7" />
          <path d="M2 16H7V19H2ZM8 16H14V20H8ZM15 17H21V21H15ZM22 18H28V22H22Z" opacity=".6" />
        </g>
      </Icon>
    ),
  },
  {
    label: 'KMPlayer',
    icon: (
      <Icon w={32} h={28}>
        <path d="M32 0V27L10 14Z" fill="#b6add0" />
        <path d="M32 0V27L22 14Z" fill="#e0dbe9" />
        <path d="M0 0L22 14L0 27Z" fill="#5f3fae" stroke="#c9bfe8" />
      </Icon>
    ),
  },
  {
    label: 'Media Player',
    icon: (
      <Icon w={28} h={26}>
        <path d="M7 1H26V24H7Z" fill="#5fa2c8" stroke="#a9d3ea" />
        <path d="M1 1H21V25H1Z" fill="#7fb9da" stroke="#b7dcef" />
        <circle cx="10.5" cy="13" r="9" fill="#f07c1c" stroke="#ffd0a0" />
        <path d="M7.5 7.5L16 13L7.5 18.5Z" fill="#fff" />
      </Icon>
    ),
  },
  {
    label: 'Torch',
    open: true,
    icon: (
      <Icon w={26} h={32}>
        <path d="M11 0Q7 4 7 9Q17 12 17 20Q17 28 8 30Q14 33 20 29Q27 22 24 14Q21 9 16 7Q11 5 11 0Z" fill="#dd2424" />
        <circle cx="10" cy="20" r="9" fill="#f2b72b" />
        <path d="M1 20Q2 28 10 30Q19 29 18 20Q14 28 8 26Q3 25 1 20Z" fill="#e07a28" />
        <circle cx="9" cy="18" r="7" fill="#2a9bb5" />
        <circle cx="7" cy="16" r="3" fill="#7fd8e6" />
      </Icon>
    ),
  },
  {
    label: 'Power',
    icon: (
      <Icon w={32} h={32}>
        <defs>
          <linearGradient id="power" x1="0" y1="0" x2="1" y2="1">
            <stop offset="0" stopColor="#f0907a" />
            <stop offset=".4" stopColor="#dc3c22" />
            <stop offset="1" stopColor="#e03a18" />
          </linearGradient>
        </defs>
        <rect x="1" y="1" width="30" height="30" rx="3" fill="url(#power)" stroke="#f4e6e2" strokeWidth="1.5" />
        <circle cx="16" cy="16" r="9" stroke="#fff" strokeWidth="2" />
        <path d="M16 11V21" stroke="#fff" strokeWidth="2" />
      </Icon>
    ),
  },
  { label: 'Creo Parametric', active: true, icon: <CreoIcon size={32} /> },
  {
    label: 'VLC',
    open: true,
    icon: (
      <Icon w={28} h={30}>
        <path d="M5 20H23L27 29H1Z" fill="#f08a14" />
        <path d="M12 1H15L22 23Q14 28 6 23Z" fill="#ef7f12" />
        <path d="M11 5H16L18 11Q13 14 9.5 11ZM8 16Q14 19 19.5 16L21 21Q14 25 6.5 21Z" fill="#e3e6e8" />
      </Icon>
    ),
  },
];

const Taskbar = () => (
  <nav className="relative flex h-10 items-center overflow-hidden bg-linear-to-r from-[#3f608e] via-[#3f5e8c] via-70% to-[#5575a6] pl-[15px] text-white">
    <svg width="300" height="40" className="absolute left-[700px] top-0" fill="none" aria-hidden="true">
      <defs>
        <linearGradient id="leaf" x1="0" y1="0" x2="1" y2="0">
          <stop offset="0" stopColor="#45668a" />
          <stop offset=".25" stopColor="#496a70" />
          <stop offset=".8" stopColor="#4a6b6c" />
          <stop offset="1" stopColor="#46678a" />
        </linearGradient>
      </defs>
      <path d="M16 0H280L215 40H72Q40 22 16 0Z" fill="url(#leaf)" />
      <path d="M70 0Q95 15 123 40" stroke="#587a94" strokeWidth="3" />
      <ellipse cx="141" cy="37" rx="3" ry="8" fill="#587a94" />
      <path d="M247 0H257L247 6Z" fill="#26498a" />
    </svg>
    {apps.map(a => (
      <button key={a.label} aria-label={a.label} className="relative flex h-10 w-[62px] items-center justify-center">
        <span
          className={clsx(
            'flex h-[38px] w-[58px] items-center justify-center',
            a.open && 'border border-[#93a6c6] bg-[#657ea4]',
            a.active && 'border border-white bg-linear-to-r from-[#88b592] to-[#6fe061]'
          )}
        >
          {a.icon}
        </span>
      </button>
    ))}
    <div className="relative ml-auto mr-[23px] flex items-center pt-px">
      <button aria-label="Show hidden icons" className="mr-3.5"><Icon w={7} h={4}><path d="M3.5 0L7 4H0Z" fill="#fff" /></Icon></button>
      <Icon w={15} h={16} className="mr-2">
        <path d="M1 4H6V8H1ZM3.5 8V15M2 1V4M5 1V4" fill="#fff" stroke="#fff" strokeWidth="1.3" />
        <path d="M8 3H14V15H8ZM10 1H12V3H10Z" stroke="#fff" strokeWidth="1.5" />
        <path d="M9.5 8H12.5V13.5H9.5Z" fill="#fff" />
      </Icon>
      <Icon w={17} h={16} className="mr-2">
        <path d="M6 3H15.5V11H6M11 11V14M8 14.5H14M3 7V13H8" stroke="#fff" strokeWidth="1.4" />
        <circle cx="3" cy="4" r="2" stroke="#fff" strokeWidth="1.3" />
      </Icon>
      <Icon w={16} h={16} className="mr-4">
        <path d="M0 5H3L7 1V15L3 11H0Z" fill="#fff" />
        <path d="M9 6Q10.5 8 9 10M11 4Q14 8 11 12M13 2.5Q17 8 13 13.5" stroke="#fff" />
      </Icon>
      <div className="text-center font-['Open_Sans',sans-serif] text-[12px] leading-[17px]">
        <p>11:23 AM</p>
        <p>19-10-2014</p>
      </div>
    </div>
  </nav>
);

export default function App() {
  return (
    <div className="min-h-screen bg-white font-['Liberation_Sans',Arial,sans-serif]">
      <div className="w-full max-w-[1366px] bg-[#fcfcfc]">
        <TitleBar />
        <RibbonTabs />
        <Ribbon />
        <main className="flex">
          <ModelTree />
          <div className="relative min-w-0 flex-1 overflow-hidden">
            <ModelView />
            <ViewToolbar />
          </div>
        </main>
        <StatusBar />
        <Taskbar />
      </div>
    </div>
  );
}
